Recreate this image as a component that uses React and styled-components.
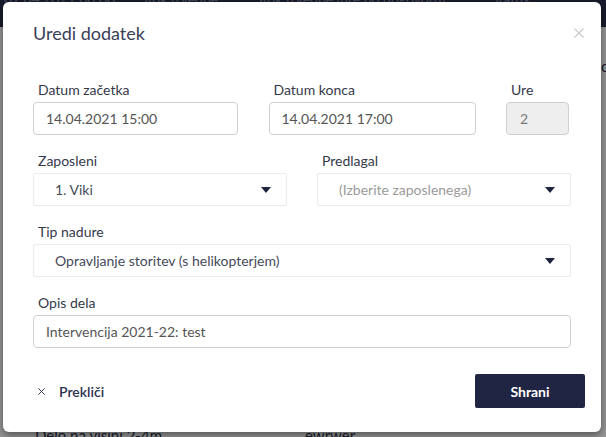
import React from 'react';
import styled, { createGlobalStyle } from 'styled-components';

const GlobalStyle = createGlobalStyle`
  html, body {
    margin: 0;
    padding: 0;
  }
  body {
    font-family: "Lato", "Open Sans", sans-serif;
    background: #fff;
    overflow: hidden;
  }
  * {
    box-sizing: border-box;
  }
`;

/* ---------- page behind the dialog ---------- */

const Page = styled.div`
  position: relative;
  width: 606px;
  height: 437px;
  overflow: hidden;
  background: #fff;
  display: flex;
  flex-direction: column;
`;

const TopBar = styled.div`
  height: 27px;
  flex: none;
  background: #2a2f4a;
  display: flex;
  align-items: flex-start;
  padding-left: 4px;
  overflow: hidden;
`;

const TopCell = styled.span`
  width: ${(p) => p.$w}px;
  flex: none;
  margin-top: -8px;
  color: #7a83a6;
  font-size: 14px;
  line-height: 14px;
  white-space: nowrap;
`;

const TableHead = styled.div`
  height: 28px;
  flex: none;
`;

const TableGap = styled.div`
  height: 328px;
  flex: none;
`;

const TableRow = styled.div`
  height: 41px;
  flex: none;
  display: grid;
  grid-template-columns: 270px 296px 1fr;
  padding: 3px 0 0 35px;
  color: #2d3350;
  font-size: 15px;
  line-height: 16px;
  white-space: nowrap;
`;

const Overlay = styled.div`
  position: absolute;
  inset: 0;
  background: rgba(0, 0, 0, 0.41);
`;

/* ---------- dialog ---------- */

const Modal = styled.div`
  position: absolute;
  top: 2px;
  left: 3px;
  width: 598px;
  height: 430px;
  background: #fff;
  border-radius: 6px;
  box-shadow: 0 3px 9px rgba(0, 0, 0, 0.45);
  display: flex;
  flex-direction: column;
`;

const Header = styled.div`
  height: 61px;
  display: flex;
  align-items: center;
  justify-content: space-between;
  padding: 0 17px 0 30px;
`;

const Title = styled.h4`
  margin: 0;
  font-size: 18px;
  font-weight: 400;
  color: #3a4058;
`;

const CloseButton = styled.button`
  border: none;
  background: none;
  padding: 0;
  width: 10px;
  height: 10px;
  display: flex;
  cursor: pointer;
`;

const Form = styled.div`
  display: flex;
  flex-direction: column;
  gap: 16px;
  padding: 17px 30px 0;
`;

const Row = styled.div`
  display: grid;
  grid-template-columns: ${(p) => p.$cols};
  column-gap: ${(p) => p.$gap || '30px'};
`;

const Field = styled.div`
  display: flex;
  flex-direction: column;
  min-width: 0;
`;

const Label = styled.label`
  padding-left: 5px;
  margin-bottom: 2px;
  font-size: 14px;
  line-height: 20px;
  color: #36394a;
`;

const Input = styled.input`
  height: 33px;
  width: 100%;
  border: 1px solid #cfcfcf;
  border-radius: 4px;
  padding: 0 ${(p) => (p.disabled ? '13px' : '12px')};
  font-family: inherit;
  font-size: 14px;
  color: ${(p) => (p.disabled ? '#7a7a7a' : '#555')};
  background: ${(p) => (p.disabled ? '#eeeeee' : '#fff')};
  outline: none;
`;

const Select = styled.div`
  height: 33px;
  border: 1px solid #ebebeb;
  border-radius: 2px;
  display: flex;
  align-items: center;
  justify-content: space-between;
  padding: 0 15px 0 21px;
  font-size: 14px;
  color: ${(p) => (p.$placeholder ? '#9a9a9a' : '#444a5c')};
  cursor: pointer;
`;

const Footer = styled.div`
  display: flex;
  align-items: center;
  justify-content: space-between;
  padding: 26px 16px 0 35px;
`;

const CancelButton = styled.button`
  border: none;
  background: none;
  padding: 0;
  display: flex;
  align-items: center;
  gap: 14px;
  font-family: inherit;
  font-size: 14px;
  font-weight: 600;
  color: #2b3150;
  cursor: pointer;
`;

const SaveButton = styled.button`
  width: 110px;
  height: 34px;
  border: none;
  border-radius: 2px;
  background: #1f2542;
  color: #fff;
  font-family: inherit;
  font-size: 14px;
  font-weight: 700;
  cursor: pointer;
`;

const Caret = () => (
  <svg width="10" height="6" viewBox="0 0 10 6">
    <path d="M0 0h10L5 6z" fill="#1e2440" />
  </svg>
);

const Cross = ({ size, color, width }) => (
  <svg width={size} height={size} viewBox="0 0 10 10">
    <path d="M0.5 0.5l9 9M9.5 0.5l-9 9" stroke={color} strokeWidth={width} fill="none" />
  </svg>
);

const Dropdown = ({ value, placeholder }) => (
  <Select $placeholder={!value}>
    <span>{value || placeholder}</span>
    <Caret />
  </Select>
);

export default function App() {
  return (
    <>
      <GlobalStyle />
      <Page>
        <TopBar>
          <TopCell $w={140}>07.04.2021 08:00</TopCell>
          <TopCell $w={115}>Rok izvedbe</TopCell>
          <TopCell $w={232}>Rok izvedbe (ure po dogovoru)</TopCell>
          <TopCell $w={100}>Status</TopCell>
        </TopBar>
        <TableHead />
        <TableRow>
          <span />
          <span />
          <span>o</span>
        </TableRow>
        <TableGap />
        <TableRow>
          <span>Delo na višini 2-4m</span>
          <span>ewrwer</span>
          <span />
        </TableRow>
        <Overlay />

        <Modal>
          <Header>
            <Title>Uredi dodatek</Title>
            <CloseButton aria-label="Zapri">
              <Cross size={10} color="#c9c9c9" width={1.2} />
            </CloseButton>
          </Header>

          <Form>
            <Row $cols="205px 207px 63px" $gap="30.5px">
              <Field>
                <Label>Datum začetka</Label>
                <Input defaultValue="14.04.2021 15:00" />
              </Field>
              <Field>
                <Label>Datum konca</Label>
                <Input defaultValue="14.04.2021 17:00" />
              </Field>
              <Field>
                <Label>Ure</Label>
                <Input defaultValue="2" disabled />
              </Field>
            </Row>

            <Row $cols="1fr 1fr">
              <Field>
                <Label>Zaposleni</Label>
                <Dropdown value="1. Viki" />
              </Field>
              <Field>
                <Label>Predlagal</Label>
                <Dropdown placeholder="(Izberite zaposlenega)" />
              </Field>
            </Row>

            <Row $cols="1fr">
              <Field>
                <Label>Tip nadure</Label>
                <Dropdown value="Opravljanje storitev (s helikopterjem)" />
              </Field>
            </Row>

            <Row $cols="1fr">
              <Field>
                <Label>Opis dela</Label>
                <Input defaultValue="Intervencija 2021-22: test" />
              </Field>
            </Row>
          </Form>

          <Footer>
            <CancelButton>
              <Cross size={7} color="#2b3150" width={1.3} />
              Prekliči
            </CancelButton>
            <SaveButton>Shrani</SaveButton>
          </Footer>
        </Modal>
      </Page>
    </>
  );
}
